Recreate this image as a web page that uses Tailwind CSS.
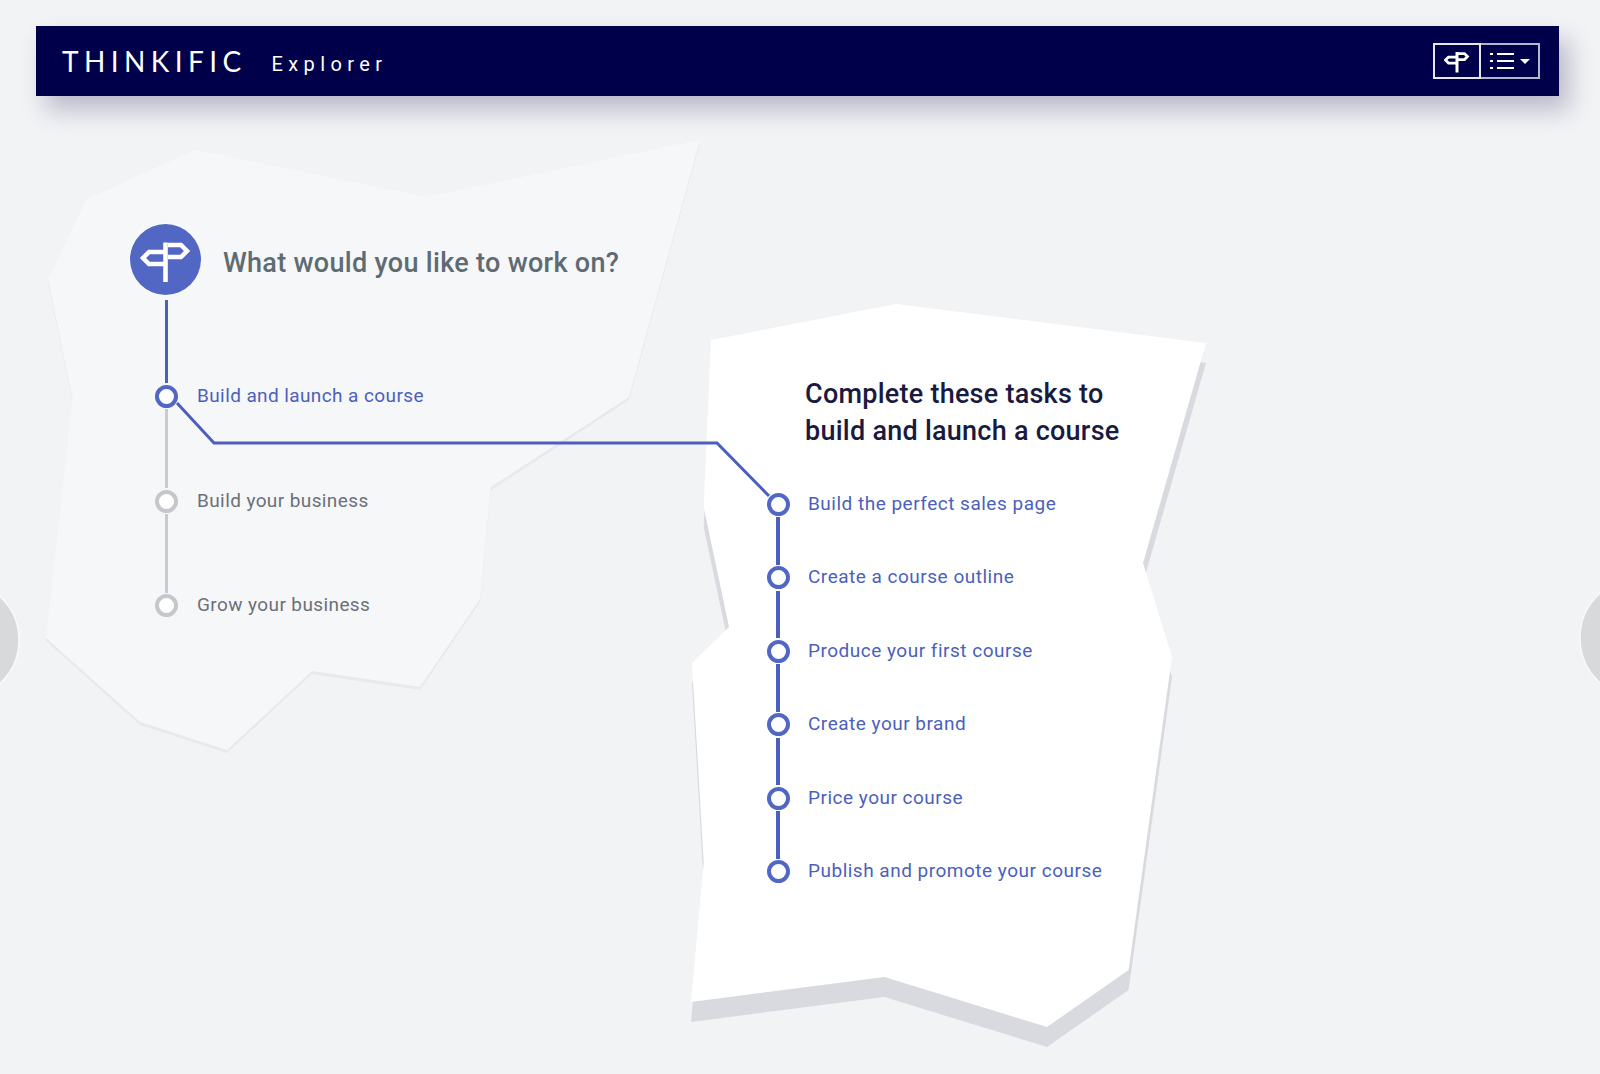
<!DOCTYPE html>
<html>
<head>
<meta charset="utf-8">
<script src="https://cdn.jsdelivr.net/npm/@tailwindcss/browser@4"></script>
</head>
<body class="bg-[#f2f3f5] font-['Roboto',sans-serif]">
<div class="relative w-[1600px] h-[1074px] overflow-hidden">
  <svg class="absolute inset-0" width="1600" height="1074" viewBox="0 0 1600 1074" fill="none">
    <polygon transform="translate(0 3)" fill="#e8e9ed" points="195,150 427,197 700,140 629,397 491,487 480,599 420,687 312,671 227,750 140,722 46,638 72.5,399 48,279 87,199"/>
    <polygon fill="#f6f7f9" points="195,150 427,197 700,140 629,397 491,487 480,599 420,687 312,671 227,750 140,722 46,638 72.5,399 48,279 87,199"/>
    <polygon transform="translate(0 20)" fill="#d9dae0" points="711,340 896,304 1206,343 1143,563 1172,657 1128.6,970 1047,1027 884.5,977 691,1002 703.7,863 692,663 729,627 703.7,507"/>
    <polygon fill="#ffffff" points="711,340 896,304 1206,343 1143,563 1172,657 1128.6,970 1047,1027 884.5,977 691,1002 703.7,863 692,663 729,627 703.7,507"/>
    <path d="M177 403 L214 443 H717 L769 496" stroke="#4c5fbd" stroke-width="3"/>
    <circle cx="-40" cy="640" r="59" fill="#d8d9db" stroke="#f8f9fa" stroke-width="1.5"/>
    <circle cx="1640" cy="638" r="60" fill="#d8d9db" stroke="#f8f9fa" stroke-width="1.5"/>
  </svg>

  <header class="relative ml-[36px] mt-[26px] w-[1523px] h-[70px] bg-[#00004a] shadow-[10px_14px_24px_rgba(40,40,90,0.28)] flex items-center pl-[26px] pr-[19px] text-white">
    <span class="font-['Lato',sans-serif] font-normal text-[28px] tracking-[5.4px] leading-none">THINKIFIC</span>
    <span class="ml-[25px] mt-[6px] text-[20px] tracking-[5.4px] leading-none">Explorer</span>
    <div class="ml-auto flex h-[36px]">
      <div class="w-[48px] border-2 border-white/90 flex items-center justify-center">
        <svg width="26" height="24" viewBox="-26 -24 52 48" fill="none" stroke="white"><path d="M-2 -8H-17L-23 -2L-17 4H-2" stroke-width="5.5"/><path d="M2 -15H15L21 -9L15 -3H2" stroke-width="5.5"/><path d="M0 -18V23" stroke-width="6"/></svg>
      </div>
      <div class="w-[59px] border-2 border-l-0 border-[#b4b5cf] flex items-center justify-center gap-[6px]">
        <svg width="24" height="18" viewBox="0 0 24 18" fill="none" stroke="white" stroke-width="2"><path d="M7 2H24M7 9H24M7 16H24"/><path d="M0 2H3M0 9H3M0 16H3"/></svg>
        <span class="w-0 h-0 border-x-[5px] border-x-transparent border-t-[5px] border-t-white"></span>
      </div>
    </div>
  </header>

  <main class="relative flex">
    <section class="w-[636px] pl-[130px] pt-[128px]">
      <div class="flex items-center gap-[22px]">
        <div class="w-[71px] h-[71px] rounded-full bg-[#5267c4] ring-1 ring-white/60 flex items-center justify-center">
          <svg width="52" height="48" viewBox="-26 -24 52 48" fill="none" stroke="white"><path d="M-2 -8H-17L-23 -2L-17 4H-2" stroke-width="4.5"/><path d="M2 -15H15L21 -9L15 -3H2" stroke-width="4.5"/><path d="M-0.5 -17.5V22" stroke-width="4.6"/></svg>
        </div>
        <h1 class="mt-[8px] text-[27px] tracking-[0.3px] font-medium text-[#5f6b73] leading-none">What would you like to work on?</h1>
      </div>
      <ul class="ml-[25px] mt-[5px] flex flex-col">
        <li class="flex flex-col items-start">
          <span class="ml-[10px] w-[3px] h-[83px] bg-[#4c5fbd]"></span>
          <div class="flex items-center gap-[19px] h-[22px] mt-[2px]">
            <span class="w-[23px] h-[23px] rounded-full border-[4.5px] border-[#5267c4] bg-white"></span>
            <span class="text-[19px] tracking-[0.4px] text-[#4c5fbd]">Build and launch a course</span>
          </div>
        </li>
        <li class="flex flex-col items-start">
          <span class="ml-[10px] mt-[2px] w-[3px] h-[79px] bg-[#c9cacd]"></span>
          <div class="flex items-center gap-[19px] h-[22px] mt-[2px]">
            <span class="w-[23px] h-[23px] rounded-full border-[4.5px] border-[#c6c7cc] bg-white"></span>
            <span class="text-[19px] tracking-[0.4px] text-[#6b7078]">Build your business</span>
          </div>
        </li>
        <li class="flex flex-col items-start">
          <span class="ml-[10px] mt-[2px] w-[3px] h-[78.5px] bg-[#c9cacd]"></span>
          <div class="flex items-center gap-[19px] h-[22px] mt-[2px]">
            <span class="w-[23px] h-[23px] rounded-full border-[4.5px] border-[#c6c7cc] bg-white"></span>
            <span class="text-[19px] tracking-[0.4px] text-[#6b7078]">Grow your business</span>
          </div>
        </li>
      </ul>
    </section>

    <section class="pl-[130.5px] pt-[280px]">
      <h2 class="ml-[38.5px] text-[27px] leading-[37px] tracking-[0.25px] font-medium text-[#1a1a40]">Complete these tasks to<br>build and launch a course</h2>
      <ul class="mt-[43px] flex flex-col">
        <li class="flex items-center gap-[18.5px] h-[22px]"><span class="w-[23px] h-[23px] rounded-full border-[4.5px] border-[#5267c4] bg-white"></span><span class="text-[19px] tracking-[0.5px] text-[#4c5fbd]">Build the perfect sales page</span></li>
        <li class="ml-[9.5px] mt-[2px] w-[4px] h-[47.5px] bg-[#4c5fbd]"></li>
        <li class="mt-[2px] flex items-center gap-[18.5px] h-[22px]"><span class="w-[23px] h-[23px] rounded-full border-[4.5px] border-[#5267c4] bg-white"></span><span class="text-[19px] tracking-[0.5px] text-[#4c5fbd]">Create a course outline</span></li>
        <li class="ml-[9.5px] mt-[2px] w-[4px] h-[47.5px] bg-[#4c5fbd]"></li>
        <li class="mt-[2px] flex items-center gap-[18.5px] h-[22px]"><span class="w-[23px] h-[23px] rounded-full border-[4.5px] border-[#5267c4] bg-white"></span><span class="text-[19px] tracking-[0.5px] text-[#4c5fbd]">Produce your first course</span></li>
        <li class="ml-[9.5px] mt-[2px] w-[4px] h-[47.5px] bg-[#4c5fbd]"></li>
        <li class="mt-[2px] flex items-center gap-[18.5px] h-[22px]"><span class="w-[23px] h-[23px] rounded-full border-[4.5px] border-[#5267c4] bg-white"></span><span class="text-[19px] tracking-[0.5px] text-[#4c5fbd]">Create your brand</span></li>
        <li class="ml-[9.5px] mt-[2px] w-[4px] h-[47.5px] bg-[#4c5fbd]"></li>
        <li class="mt-[2px] flex items-center gap-[18.5px] h-[22px]"><span class="w-[23px] h-[23px] rounded-full border-[4.5px] border-[#5267c4] bg-white"></span><span class="text-[19px] tracking-[0.5px] text-[#4c5fbd]">Price your course</span></li>
        <li class="ml-[9.5px] mt-[2px] w-[4px] h-[47.5px] bg-[#4c5fbd]"></li>
        <li class="mt-[2px] flex items-center gap-[18.5px] h-[22px]"><span class="w-[23px] h-[23px] rounded-full border-[4.5px] border-[#5267c4] bg-white"></span><span class="text-[19px] tracking-[0.5px] text-[#4c5fbd]">Publish and promote your course</span></li>
      </ul>
    </section>
  </main>
</div>
</body>
</html>
